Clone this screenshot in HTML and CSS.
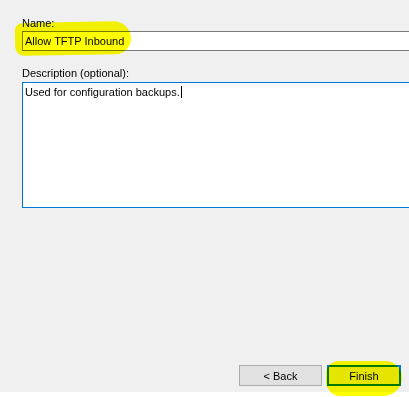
FILE: index.html
```html
<!DOCTYPE html>
<html>
  <head>
    <title>New Inbound Rule Wizard</title>
    <link rel="stylesheet" href="styles.css">
  </head>
  <body>
    <div id="wizard">
      <div class="field">
        <label class="label">Name:</label>
        <div class="name-box">Allow TFTP Inbound</div>
      </div>
      <div class="field">
        <label class="label">Description (optional):</label>
        <div class="desc-box">Used for configuration backups.<span class="caret"></span></div>
      </div>
      <div id="buttons">
        <button class="btn">&lt; Back</button>
        <button class="btn btn-default">Finish</button>
      </div>
      <!-- marker highlights -->
      <div class="marker marker-name"></div>
      <div class="marker marker-finish"></div>
    </div>
    <div id="bottom-strip"></div>
  </body>
</html>
```

FILE: styles.css
```css
html, body {
  margin: 0;
  overflow: hidden;
}

body {
  font-family: "Liberation Sans", Arial, sans-serif;
  font-size: 11px;
  color: #000;
  background-color: #f0f0f0;
  width: 409px;
  height: 397px;
}

#wizard {
  position: relative;
  height: 392px;
  padding: 0 0 0 22px;
  box-sizing: border-box;
  display: flex;
  flex-direction: column;
}

.field {
  display: flex;
  flex-direction: column;
}

.label {
  display: block;
  line-height: 13px;
}

.field:first-child {
  margin-top: 17px;
}

.field:first-child .label {
  margin-bottom: 1px;
}

/* boxes run off the right edge of the window, so no right border */
.name-box {
  height: 20px;
  box-sizing: border-box;
  border: 1px solid #7a7a7a;
  border-right: none;
  background-color: #fff;
  padding: 3px 0 0 2px;
  line-height: 13px;
}

.field + .field {
  margin-top: 16px;
}

.field + .field .label {
  margin-bottom: 2px;
}

.desc-box {
  height: 126px;
  box-sizing: border-box;
  border: 1px solid #0078d7;
  border-right: none;
  background-color: #fff;
  padding: 3px 0 0 2px;
  line-height: 13px;
}

.caret {
  display: inline-block;
  width: 1px;
  height: 12px;
  background-color: #000;
  vertical-align: -2px;
  margin-left: 1px;
}

#buttons {
  margin-top: auto;
  margin-bottom: 6px;
  display: flex;
  justify-content: flex-end;
  gap: 5px;
  padding-right: 8px;
}

.btn {
  font-family: "Liberation Sans", Arial, sans-serif;
  font-size: 11px;
  height: 21px;
  width: 83px;
  padding: 0;
  background-color: #e1e1e1;
  border: 1px solid #adadad;
  color: #000;
}

.btn-default {
  width: 74px;
  border: 2px solid #0078d7;
  background-color: #e5e5e5;
}

#bottom-strip {
  height: 5px;
  background-color: #fff;
}

.marker {
  position: absolute;
  background-color: #ffff00;
  mix-blend-mode: multiply;
}

.marker-name {
  left: 15px;
  top: 22px;
  width: 116px;
  height: 33px;
  border-radius: 10px 22px 20px 12px;
  transform: rotate(-1deg);
}

.marker-finish {
  left: 326px;
  top: 361px;
  width: 76px;
  height: 35px;
  border-radius: 14px 18px 20px 16px;
}
```
